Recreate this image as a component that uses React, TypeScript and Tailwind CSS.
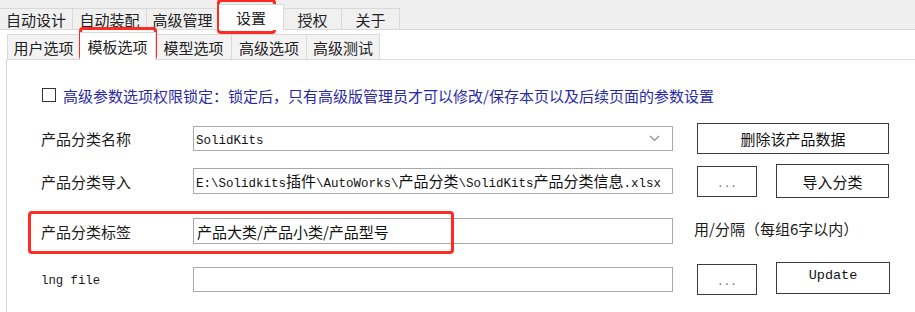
const cjk = "font-['Noto_Sans_CJK_SC',sans-serif]";
const mono = "font-['Liberation_Mono',monospace]";

const topTabs = [
  { label: "自动设计", width: "w-[73px]" },
  { label: "自动装配", width: "w-[74px]" },
  { label: "高级管理", width: "w-[72px]" },
  { label: "设置", width: "w-[65px]", active: true },
  { label: "授权", width: "w-[58px]" },
  { label: "关于", width: "w-[58px]" },
];

const subTabs = [
  { label: "用户选项", width: "w-[73px]" },
  { label: "模板选项", width: "w-[76px]", active: true },
  { label: "模型选项", width: "w-[76px]" },
  { label: "高级选项", width: "w-[75px]" },
  { label: "高级测试", width: "w-[73px]" },
];

// SimSun-like text: half-width latin, full-width CJK
const MixedText = ({ text }: { text: string }) => {
  const parts = text.split(/([\u3400-\u9fff]+)/).filter(Boolean);
  return (
    <span className="whitespace-pre">
      {parts.map((p, i) =>
        /[\u3400-\u9fff]/.test(p) ? (
          <span key={i} className={`${cjk} text-[15px]`}>
            {p}
          </span>
        ) : (
          <span key={i} className={`${mono} text-[12.5px]`}>
            {p}
          </span>
        )
      )}
    </span>
  );
};

const Field = ({ children, height = "h-[26px]" }: { children?: React.ReactNode; height?: string }) => (
  <div className={`w-[480px] ${height} border border-[#a9a9a9] bg-white flex items-center pl-[2px] overflow-hidden leading-none text-[#111]`}>
    {children}
  </div>
);

const Button = ({ children, className }: { children: React.ReactNode; className: string }) => (
  <div className={`border border-[#3a3a3a] bg-white flex items-center justify-center text-[#111] leading-none ${className}`}>
    {children}
  </div>
);

const Label = ({ children }: { children: React.ReactNode }) => (
  <div className="w-[152px] shrink-0 text-[15px] text-[#1a1a1a] leading-none">{children}</div>
);

const Marker = ({ className }: { className: string }) => (
  <div className={`absolute border-[3px] border-[#ff2b22] rounded-[4px] pointer-events-none ${className}`} />
);

export default function App() {
  return (
    <div className={`relative w-[915px] h-[312px] bg-white overflow-hidden flex flex-col ${cjk}`}>
      {/* Main tabs */}
      <div className="h-[30px] shrink-0 bg-[#efefef] border-b border-[#d9d9d9] flex items-end">
        {topTabs.map((t) => (
          <div
            key={t.label}
            className={`${t.width} flex items-center justify-center text-[15px] leading-none text-[#222] border-r border-t border-[#d9d9d9] ${
              t.active ? "h-[26px] bg-white -mb-px relative z-10" : "h-[21px] bg-[#f0f0f0]"
            }`}
          >
            {t.label}
          </div>
        ))}
      </div>

      {/* Sub tabs */}
      <div className="h-[29px] shrink-0 bg-white pl-[7px] flex items-end">
        {subTabs.map((t) => (
          <div
            key={t.label}
            className={`${t.width} flex items-center justify-center text-[15px] leading-none text-[#222] border-r border-t border-[#d9d9d9] first:border-l ${
              t.active ? "h-[28px] bg-white -mb-px relative z-10" : "h-[25px] bg-[#f3f3f3]"
            }`}
          >
            {t.label}
          </div>
        ))}
      </div>

      {/* Panel */}
      <div className="flex-1 ml-[6px] border-l border-t border-[#d9d9d9] pl-[34px] flex flex-col">
        <div className="mt-[25px] h-[20px] flex items-center">
          <div className="w-[14px] h-[14px] border border-[#333] bg-white ml-px" />
          <span className="ml-[7px] text-[15px] leading-none text-[#2a2aa5]">
            高级参数选项权限锁定：锁定后，只有高级版管理员才可以修改/保存本页以及后续页面的参数设置
          </span>
        </div>

        <div className="mt-[18px] h-[31px] flex items-center">
          <Label>产品分类名称</Label>
          <Field height="h-[25px]">
            <div className="flex-1">
              <MixedText text="SolidKits" />
            </div>
            <svg width="11" height="7" viewBox="0 0 11 7" className="mr-[12px]">
              <polyline points="1,1 5.5,5.5 10,1" fill="none" stroke="#8a8a8a" strokeWidth="1.2" />
            </svg>
          </Field>
          <Button className="ml-[24px] w-[192px] h-[31px] text-[15px]">删除该产品数据</Button>
        </div>

        <div className="mt-[10px] h-[34px] flex items-center">
          <Label>产品分类导入</Label>
          <Field>
            <MixedText text="E:\Solidkits插件\AutoWorks\产品分类\SolidKits产品分类信息.xlsx" />
          </Field>
          <Button className={`ml-[24px] w-[60px] h-[31px] text-[11px] text-[#666] ${mono}`}>
            <span className="mt-[6px]">...</span>
          </Button>
          <Button className="ml-[19px] w-[113px] h-[34px] text-[15px]">导入分类</Button>
        </div>

        <div className="mt-[20px] h-[26px] flex items-center">
          <Label>产品分类标签</Label>
          <Field>
            <span className="text-[15px] ml-px">产品大类/产品小类/产品型号</span>
          </Field>
          <span className="ml-[21px] mb-[5px] text-[15px] leading-none text-[#1a1a1a]">用/分隔（每组6字以内）</span>
        </div>

        <div className="mt-[18px] h-[34px] flex items-center">
          <Label>
            <span className={`${mono} text-[12.3px]`}>lng file</span>
          </Label>
          <Field height="h-[25px]" />
          <Button className={`ml-[24px] w-[60px] h-[31px] text-[11px] text-[#666] ${mono}`}>
            <span className="mt-[6px]">...</span>
          </Button>
          <Button className={`ml-[19px] w-[114px] h-[32px] self-start text-[13.5px] ${mono}`}>
            <span className="-mt-[4px]">Update</span>
          </Button>
        </div>
      </div>

      {/* red annotation boxes */}
      <Marker className="left-[217px] top-[-1px] w-[59px] h-[35px]" />
      <Marker className="left-[79px] top-[27px] w-[78px] h-[33px]" />
      <Marker className="left-[28px] top-[211px] w-[426px] h-[43px]" />
    </div>
  );
}
